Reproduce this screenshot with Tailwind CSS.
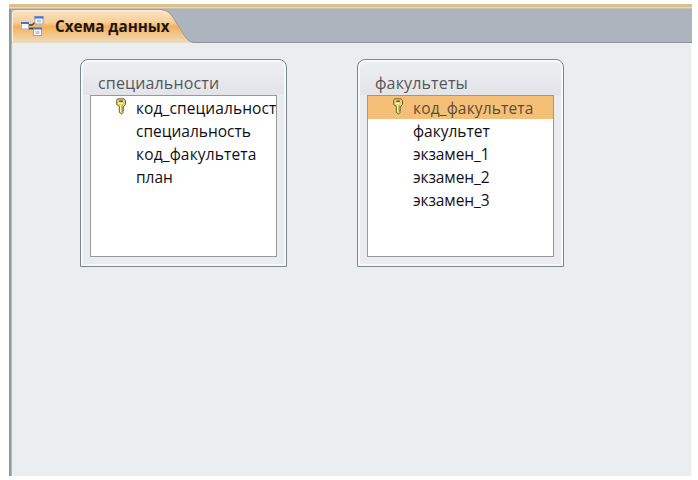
<!DOCTYPE html>
<html lang="ru">
<head>
<meta charset="utf-8">
<title>Схема данных</title>
<script src="https://cdn.jsdelivr.net/npm/@tailwindcss/browser@4"></script>
</head>
<body class="w-[698px] h-[480px] overflow-hidden bg-white pt-1 pl-[9px] font-['Open_Sans','Noto_Sans',sans-serif]">
<svg class="hidden">
  <symbol id="key" viewBox="0 0 12 17">
    <path d="M2.500 .8H9L10.500 2.500V6.500L8.700 8.300V10l-1 1 1 1.100-1 1.100.8 1-1.900 1.800-2.300-1.600V8.300L1.700 6.700V2.300z" fill="#e3d477" stroke="#6d602f" stroke-width="1"/>
    <path d="M4.200 3.200h3.800" stroke="#675b35" stroke-width="1.500"/>
    <path d="M3 5.400h4.500M5.500 7.500v6.500" stroke="#fff6a8" stroke-width="1"/>
    <path d="M7.300 7.500v6" stroke="#9c8c3b" stroke-width="1"/>
  </symbol>
</svg>
<main class="w-[683px] h-[472px] flex flex-col">
  <div class="h-[3px] bg-[#dcc08b]"></div>
  <div class="h-px bg-[#e2d8c4]"></div>
  <div class="h-px bg-[#c3c0b8]"></div>
  <div class="flex-1 flex flex-col border-l-2 border-[#8f969e]">
    <header class="h-[34px] bg-[#adb4be] border-b border-[#8e949c] relative">
      <svg class="absolute left-0 top-0" width="200" height="34" viewBox="0 0 200 34">
        <defs><linearGradient id="tab" x2="0" y2="1"><stop offset="0" stop-color="#fbe3c6"/><stop offset=".38" stop-color="#f8cf98"/><stop offset=".5" stop-color="#f2b15d"/><stop offset=".75" stop-color="#f4c68b"/><stop offset="1" stop-color="#e9dcc4"/></linearGradient></defs>
        <path d="M1 34V5Q1 1 5 1H150Q157 1 161 7L173 26Q177 33 183 34z" fill="url(#tab)"/>
        <path d="M1.500 34V5Q1.500 1.500 5 1.500H150" fill="none" stroke="#fdf0dc"/>
        <path d="M2 .5H150Q157 1 161 7L173 26Q177 33 183 33.500" fill="none" stroke="#a39b91"/>
      </svg>
      <div class="relative flex items-center h-[33px] pl-[9px]">
        <svg width="25" height="22" viewBox="0 0 25 22">
          <path d="M8 10H12L15 7.500M8 13.500H14" fill="none" stroke="#3c3a3c" stroke-width="1.300"/>
          <g stroke-width="1"><rect x="1.500" y="8" width="7" height="6" fill="#fff" stroke="#a3b3d0"/><rect x="15" y="1.500" width="8" height="7.500" fill="#fff" stroke="#8ea4d6"/><rect x="13.500" y="13" width="8" height="7.500" fill="#fff" stroke="#8ea4d6"/></g>
          <path d="M1 8H9M14.500 2.500H23.500M13 13.500H22" stroke="#4a70cc" stroke-width="2"/>
          <path d="M17 4.500h4v3h-4zM15.500 16h4v3h-4z" fill="#b8cbf2"/>
        </svg>
        <h1 class="ml-[10px] text-[15.2px] leading-5 font-bold text-[#1c1714] whitespace-nowrap">Схема данных</h1>
      </div>
    </header>
    <div class="flex-1 w-[681px] bg-[#eaeef1] border-l border-[#b5babf] border-r border-r-[#f3f5f7] pl-[68px] pt-4 flex items-start gap-[70px]">
      <section class="w-[207px] h-[208px] border border-[#7e8891] rounded-t-[8px] bg-[#ebecf0] bg-[linear-gradient(#eeeff2,#e3e4e9)] bg-no-repeat bg-[length:100%_35px] shadow-[inset_0_0_0_2px_#f7f8fa] px-[9px]">
        <h2 class="h-[35px] pt-[13px] pl-2 text-[16px] leading-5 text-[#55565b] whitespace-nowrap tracking-[0.15px]">специальности</h2>
        <ul class="h-[162px] border border-[#94999f] bg-white overflow-hidden text-[15.5px] leading-[25px] text-[#101014] whitespace-nowrap">
          <li class="h-[23px] flex pl-[24px]"><svg class="w-[12px] h-[17px] mt-[2px] mr-[9px] shrink-0"><use href="#key"/></svg><span class="tracking-[0.1px]">код_специальност</span></li>
          <li class="h-[23px] pl-[45px]">специальность</li>
          <li class="h-[23px] pl-[45px] tracking-[0.15px]">код_факультета</li>
          <li class="h-[23px] pl-[45px]">план</li>
        </ul>
      </section>
      <section class="w-[207px] h-[208px] border border-[#7e8891] rounded-t-[8px] bg-[#ebecf0] bg-[linear-gradient(#eeeff2,#e3e4e9)] bg-no-repeat bg-[length:100%_35px] shadow-[inset_0_0_0_2px_#f7f8fa] px-[9px]">
        <h2 class="h-[35px] pt-[13px] pl-2 text-[16px] leading-5 text-[#55565b] whitespace-nowrap tracking-[0.15px]">факультеты</h2>
        <ul class="h-[162px] border border-[#94999f] bg-white overflow-hidden text-[15.5px] leading-[25px] text-[#101014] whitespace-nowrap">
          <li class="h-[23px] flex pl-[24px] bg-[#f4c078] text-[#604b38]"><svg class="w-[12px] h-[17px] mt-[2px] mr-[9px] shrink-0"><use href="#key"/></svg><span class="tracking-[0.15px]">код_факультета</span></li>
          <li class="h-[23px] pl-[45px]">факультет</li>
          <li class="h-[23px] pl-[45px] tracking-[-0.1px]">экзамен_1</li>
          <li class="h-[23px] pl-[45px] tracking-[-0.1px]">экзамен_2</li>
          <li class="h-[23px] pl-[45px] tracking-[-0.1px]">экзамен_3</li>
        </ul>
      </section>
    </div>
  </div>
</main>
</body>
</html>
